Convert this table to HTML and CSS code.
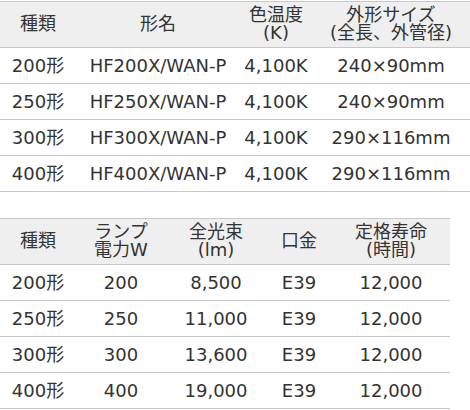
FILE: index.html
```html
<!DOCTYPE html>
<html lang="ja">
<head>
<meta charset="utf-8">
<title>仕様</title>
<link rel="stylesheet" href="styles.css">
</head>
<body>
<table class="spec spec-model">
  <colgroup>
    <col class="c-kind">
    <col class="c-name">
    <col class="c-temp">
    <col class="c-size">
  </colgroup>
  <thead>
    <tr>
      <th>種類</th>
      <th>形名</th>
      <th>色温度<br>(K)</th>
      <th>外形サイズ<br>(全長、外管径)</th>
    </tr>
  </thead>
  <tbody>
    <tr><td>200形</td><td>HF200X/WAN-P</td><td>4,100K</td><td>240×90mm</td></tr>
    <tr><td>250形</td><td>HF250X/WAN-P</td><td>4,100K</td><td>240×90mm</td></tr>
    <tr><td>300形</td><td>HF300X/WAN-P</td><td>4,100K</td><td>290×116mm</td></tr>
    <tr><td>400形</td><td>HF400X/WAN-P</td><td>4,100K</td><td>290×116mm</td></tr>
  </tbody>
</table>

<table class="spec spec-lamp">
  <colgroup>
    <col class="c-kind">
    <col class="c-watt">
    <col class="c-lum">
    <col class="c-base">
    <col class="c-life">
  </colgroup>
  <thead>
    <tr>
      <th>種類</th>
      <th>ランプ<br>電力W</th>
      <th>全光束<br>(lm)</th>
      <th>口金</th>
      <th>定格寿命<br>(時間)</th>
    </tr>
  </thead>
  <tbody>
    <tr><td>200形</td><td>200</td><td>8,500</td><td>E39</td><td>12,000</td></tr>
    <tr><td>250形</td><td>250</td><td>11,000</td><td>E39</td><td>12,000</td></tr>
    <tr><td>300形</td><td>300</td><td>13,600</td><td>E39</td><td>12,000</td></tr>
    <tr><td>400形</td><td>400</td><td>19,000</td><td>E39</td><td>12,000</td></tr>
  </tbody>
</table>
</body>
</html>
```

FILE: styles.css
```css
html, body {
  margin: 0;
  padding: 0;
  background: #fff;
}

body {
  padding-top: 1px;
  font-family: "DejaVu Sans", "Noto Sans CJK JP", sans-serif;
  font-size: 18px;
  color: #333;
}

.spec {
  border-collapse: collapse;
  table-layout: fixed;
}

.spec th,
.spec td {
  padding: 5px 2px;
  text-align: center;
  vertical-align: middle;
  border-top: 1px solid #c8c8c8;
  border-bottom: 1px solid #c8c8c8;
  white-space: nowrap;
}

.spec th {
  font-weight: normal;
  background: #efefef;
  line-height: 18px;
  padding-top: 4px;
  padding-bottom: 5px;
}

.spec td {
  line-height: 25px;
}

.spec-model {
  width: 470px;
}

.spec-lamp {
  width: 450px;
  margin-top: 26px;
}

.c-kind { width: 76px; }
.c-name { width: 164px; }
.c-temp { width: 72px; }
.c-size { width: 158px; }

.c-watt { width: 90px; }
.c-lum { width: 100px; }
.c-base { width: 66px; }
.c-life { width: 118px; }
```
